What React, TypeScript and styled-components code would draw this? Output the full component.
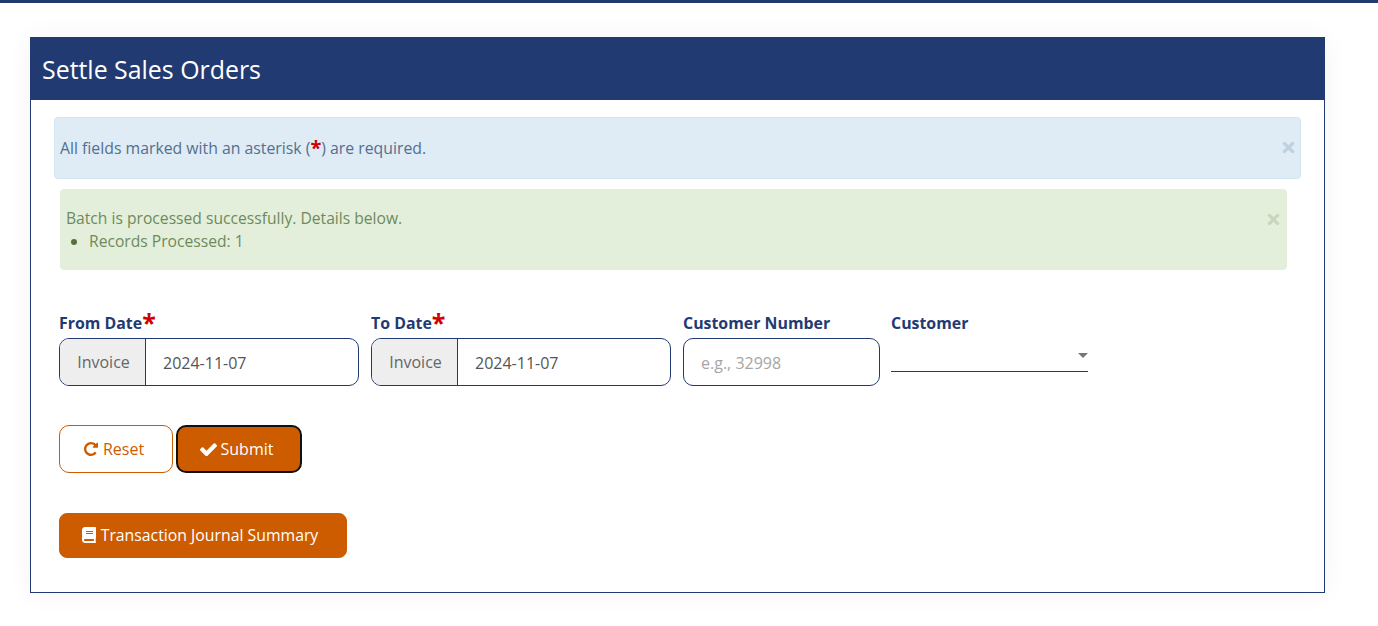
import React from "react";
import styled, { createGlobalStyle } from "styled-components";
import { FaBook, FaTimes } from "react-icons/fa";

const navy = "#223a72";
const orange = "#cd5c00";

const Global = createGlobalStyle`
  html, body { margin: 0; padding: 0; background: #fff; }
  body { font-family: "Open Sans", "Liberation Sans", sans-serif; font-size: 16px; color: #555; }
  * { box-sizing: border-box; }
`;

const TopBar = styled.div`
  height: 3px;
  background: ${navy};
`;

const Page = styled.main`
  padding: 34px 53px 30px 30px;
`;

const Card = styled.section`
  height: 556px;
  border: 1px solid ${navy};
  box-shadow: 0 0 24px rgba(0, 0, 0, 0.05);
`;

const CardHeader = styled.header`
  height: 63px;
  margin: -1px -1px 0;
  padding: 1px 12px 0;
  display: flex;
  align-items: center;
  background: ${navy};
`;

const Title = styled.h1`
  margin: 0;
  font-size: 24.9px;
  font-weight: 400;
  line-height: 34px;
  color: #fff;
`;

const Body = styled.div`
  padding: 17px 23px 0 23px;
`;

const Alert = styled.div<{ $tone: "info" | "success" }>`
  position: relative;
  border-radius: 4px;
  border: 1px solid ${(p) => (p.$tone === "info" ? "#cfe6f2" : "#e2efda")};
  background: ${(p) => (p.$tone === "info" ? "#dfebf5" : "#e3efda")};
  color: ${(p) => (p.$tone === "info" ? "#53708f" : "#6e8a5d")};
  font-size: ${(p) => (p.$tone === "info" ? "15.8px" : "15.65px")};
  line-height: 22px;
  padding: ${(p) => (p.$tone === "info" ? "19px 5px" : "17px 5px 17px")};
  margin: ${(p) => (p.$tone === "info" ? "0 0 10px 0" : "0 14px 0 6px")};
`;

const Close = styled.span<{ $tone: "info" | "success" }>`
  position: absolute;
  right: ${(p) => (p.$tone === "info" ? "3px" : "4px")};
  top: 21px;
  display: flex;
  font-size: 17px;
  color: ${(p) => (p.$tone === "info" ? "#bfd0de" : "#c8d6bd")};
`;

const Star = styled.span`
  position: relative;
  top: 1px;
  color: #d00000;
  font-weight: 700;
  font-size: 20px;
  line-height: 0;
`;

const AlertList = styled.ul`
  margin: 1px 0 0;
  padding: 0 0 0 23px;
  li::marker { color: #55703f; }
`;

const FormRow = styled.div`
  display: flex;
  gap: 12px;
  margin: 38px 0 0 5px;
`;

const Field = styled.div<{ $w: number; $pull?: boolean }>`
  width: ${(p) => p.$w}px;
  flex: none;
  margin-left: ${(p) => (p.$pull ? "-1px" : "0")};
`;

const Label = styled.label`
  display: block;
  height: 30px;
  font-weight: 700;
  font-size: 15.9px;
  line-height: 30px;
  color: ${navy};
  white-space: nowrap;
`;

const LabelStar = styled.span`
  color: #d00000;
  font-size: 25px;
  font-weight: 700;
  line-height: 0;
  position: relative;
  top: 3px;
`;

const Group = styled.div`
  display: flex;
  height: 48px;
  border: 1px solid ${navy};
  border-radius: 10px;
  overflow: hidden;
  background: #fff;
`;

const Addon = styled.span`
  width: 86px;
  flex: none;
  display: flex;
  align-items: center;
  justify-content: center;
  padding-left: 2px;
  background: #eee;
  border-right: 1px solid ${navy};
  color: #666;
`;

const Value = styled.span<{ $placeholder?: boolean }>`
  flex: 1;
  display: flex;
  align-items: center;
  padding: 2px 0 0 17px;
  color: ${(p) => (p.$placeholder ? "#a6a6a6" : "#555")};
`;

const SelectBox = styled.div`
  position: relative;
  height: 34px;
  border-bottom: 1px solid ${navy};
`;

const Caret = styled.span`
  position: absolute;
  right: 0;
  top: 15px;
  width: 0;
  height: 0;
  border-left: 5px solid transparent;
  border-right: 5px solid transparent;
  border-top: 5px solid #777;
`;

const Actions = styled.div`
  display: flex;
  gap: 3px;
  margin: 39px 0 0 5px;
`;

const Button = styled.button<{ $variant: "outline" | "primary" | "focus"; $w: number; $h: number }>`
  width: ${(p) => p.$w}px;
  height: ${(p) => p.$h}px;
  display: flex;
  align-items: center;
  justify-content: center;
  gap: ${(p) => (p.$variant === "outline" ? "5px" : "4px")};
  padding: ${(p) =>
    p.$variant === "primary" ? "0 7px 2px 0" : p.$variant === "outline" ? "0 4px 0 0" : "0 5px 0 0"};
  font-family: inherit;
  font-size: ${(p) => (p.$variant === "primary" ? "15.8px" : "16px")};
  border-radius: ${(p) => (p.$variant === "primary" ? "8px" : "10px")};
  color: ${(p) => (p.$variant === "outline" ? orange : "#fff")};
  background: ${(p) => (p.$variant === "outline" ? "#fff" : orange)};
  border: ${(p) =>
    p.$variant === "outline"
      ? `1px solid ${orange}`
      : p.$variant === "focus"
      ? "2px solid #111"
      : `1px solid ${orange}`};
`;

const JournalRow = styled.div`
  margin: 40px 0 0 5px;
`;

const RepeatIcon = () => (
  <svg width="14" height="14" viewBox="128 128 1536 1536" fill="currentColor" aria-hidden="true">
    <path d="M1664 256v448q0 26-19 45t-45 19h-448q-42 0-59-40-17-39 14-69l138-138q-148-137-349-137-104 0-198.5 40.5t-163.5 109.5-109.5 163.5-40.5 198.5 40.5 198.5 109.5 163.5 163.5 109.5 198.5 40.5q119 0 225-52t179-147q7-10 23-12 15 0 25 9l137 138q9 8 9.5 20.5t-7.5 22.5q-109 132-264 204.5t-327 72.5q-156 0-298-61t-245-164-164-245-61-298 61-298 164-245 245-164 298-61q147 0 284.5 55.5t244.5 156.5l130-129q29-31 70-14 39 17 39 59z" />
  </svg>
);

const CheckIcon = () => (
  <svg width="17" height="13" viewBox="120 320 1552 1180" fill="currentColor" aria-hidden="true">
    <path d="M1671 566q0 40-28 68l-724 724-136 136q-28 28-68 28t-68-28l-136-136-362-362q-28-28-28-68t28-68l136-136q28-28 68-28t68 28l294 295 656-657q28-28 68-28t68 28l136 136q28 28 28 68z" />
  </svg>
);

export default function App() {
  return (
    <>
      <Global />
      <TopBar />
      <Page>
        <Card>
          <CardHeader>
            <Title>Settle Sales Orders</Title>
          </CardHeader>
          <Body>
            <Alert $tone="info">
              All fields marked with an asterisk (<Star>*</Star>) are required.
              <Close $tone="info"><FaTimes /></Close>
            </Alert>
            <Alert $tone="success">
              Batch is processed successfully. Details below.
              <AlertList>
                <li>Records Processed: 1</li>
              </AlertList>
              <Close $tone="success"><FaTimes /></Close>
            </Alert>
            <FormRow>
              <Field $w={300}>
                <Label>From Date<LabelStar>*</LabelStar></Label>
                <Group>
                  <Addon>Invoice</Addon>
                  <Value>2024-11-07</Value>
                </Group>
              </Field>
              <Field $w={300}>
                <Label>To Date<LabelStar>*</LabelStar></Label>
                <Group>
                  <Addon>Invoice</Addon>
                  <Value>2024-11-07</Value>
                </Group>
              </Field>
              <Field $w={197}>
                <Label>Customer Number</Label>
                <Group>
                  <Value $placeholder>e.g., 32998</Value>
                </Group>
              </Field>
              <Field $w={197} $pull>
                <Label>Customer</Label>
                <SelectBox>
                  <Caret />
                </SelectBox>
              </Field>
            </FormRow>
            <Actions>
              <Button $variant="outline" $w={114} $h={48}><RepeatIcon />Reset</Button>
              <Button $variant="focus" $w={126} $h={48}><CheckIcon />Submit</Button>
            </Actions>
            <JournalRow>
              <Button $variant="primary" $w={288} $h={45}><FaBook size={16} />Transaction Journal Summary</Button>
            </JournalRow>
          </Body>
        </Card>
      </Page>
    </>
  );
}
